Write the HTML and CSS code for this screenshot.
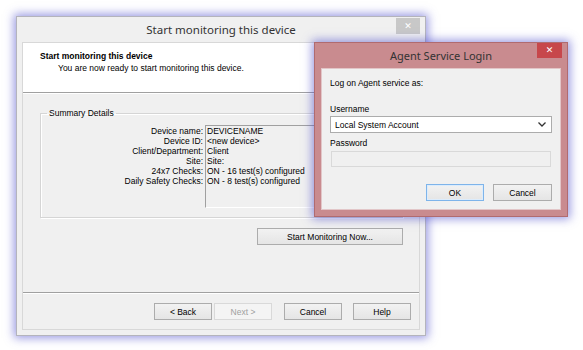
FILE: index.html
```html
<!DOCTYPE html>
<html lang="en">
<head>
  <meta charset="UTF-8">
  <title>Start monitoring this device</title>
  <link rel="stylesheet" href="styles.css">
</head>
<body>
  <!-- Wizard window -->
  <div class="window wizard">
    <div class="titlebar">
      <span></span>
      <span class="title">Start monitoring this device</span>
      <span class="close">&#x2715;</span>
    </div>
    <div class="client">
      <div class="wizard-header">
        <h3>Start monitoring this device</h3>
        <p>You are now ready to start monitoring this device.</p>
      </div>

      <div class="wizard-body">
        <fieldset class="group">
          <legend>Summary Details</legend>
          <div class="summary">
            <div class="labels">
              <span>Device name:</span>
              <span>Device ID:</span>
              <span>Client/Department:</span>
              <span>Site:</span>
              <span>24x7 Checks:</span>
              <span>Daily Safety Checks:</span>
            </div>
            <div class="values">
              <span>DEVICENAME</span>
              <span>&lt;new device&gt;</span>
              <span>Client</span>
              <span>Site:</span>
              <span>ON - 16 test(s) configured</span>
              <span>ON - 8 test(s) configured</span>
            </div>
          </div>
        </fieldset>
        <div class="start-row">
          <button class="btn btn-start">Start Monitoring Now...</button>
        </div>
      </div>

      <div class="wizard-footer">
        <button class="btn">&lt; Back</button>
        <button class="btn" disabled>Next &gt;</button>
        <button class="btn btn-gap">Cancel</button>
        <button class="btn btn-gap">Help</button>
      </div>
    </div>
  </div>

  <!-- Login window -->
  <div class="window login">
    <div class="titlebar">
      <span></span>
      <span class="title">Agent Service Login</span>
      <span class="close">&#x2715;</span>
    </div>
    <div class="client">
      <p class="intro">Log on Agent service as:</p>
      <label class="field-label">Username</label>
      <div class="combo">
        <span>Local System Account</span>
        <svg width="8" height="5" viewBox="0 0 8 5"><path d="M0.5 0.5 L4 4 L7.5 0.5" fill="none" stroke="#333" stroke-width="1.3"/></svg>
      </div>
      <label class="field-label">Password</label>
      <div class="input-disabled"></div>
      <div class="login-buttons">
        <button class="btn btn-default">OK</button>
        <button class="btn">Cancel</button>
      </div>
    </div>
  </div>
</body>
</html>
```

FILE: styles.css
```css
/* General Reset */
* {
  margin: 0;
  padding: 0;
  box-sizing: border-box;
}

body {
  position: relative;
  width: 583px;
  height: 350px;
  background: #fff;
  font-family: "Liberation Sans", Arial, sans-serif;
  font-size: 8.5px;
  color: #000;
  overflow: hidden;
}

/* Windows on the desktop */
.window {
  position: absolute;
  display: flex;
  flex-direction: column;
  box-shadow: 0 0 9px 2px rgba(70, 70, 200, 0.55);
}

.wizard {
  left: 16px;
  top: 16px;
  width: 410px;
  height: 320px;
  background: #f0f0f0;
  border: 1px solid #b4b4bc;
  padding: 0 5px 5px;
}

.login {
  left: 314px;
  top: 42px;
  width: 254px;
  height: 175px;
  background: #c98b8f;
  border: 1px solid #b06b70;
  padding: 0 6px 6px;
}

/* Title bar */
.titlebar {
  display: grid;
  grid-template-columns: 1fr auto 1fr;
  height: 25px;
  flex-shrink: 0;
}

.title {
  font-family: "Noto Sans", "Open Sans", sans-serif;
  font-size: 11.5px;
  color: #333;
  line-height: 25px;
  white-space: nowrap;
}

.close {
  justify-self: end;
  width: 24px;
  height: 16px;
  margin-top: 1px;
  background: #c8c8c8;
  color: #fff;
  font-family: "DejaVu Sans", sans-serif;
  font-size: 9px;
  font-weight: bold;
  line-height: 16px;
  text-align: center;
}

.login .title {
  font-size: 11px;
  line-height: 26px;
}

.login .close {
  width: 25px;
  height: 15px;
  margin-top: 0;
  margin-right: -1px;
  line-height: 15px;
  background: #c7474b;
}

/* Client areas */
.client {
  flex: 1;
  display: flex;
  flex-direction: column;
  background: #f0f0f0;
  border: 1px solid #d8d8d8;
}

.wizard-header {
  height: 50px;
  background: #fff;
  border-bottom: 1px solid #a0a0a0;
  padding: 8px 0 0 17px;
}

.wizard-header h3 {
  font-size: 8.5px;
  font-weight: bold;
  line-height: 11px;
}

.wizard-header p {
  line-height: 12px;
  padding-left: 18px;
}

.wizard-body {
  flex: 1;
  display: flex;
  flex-direction: column;
  border-top: 1px solid #fff;
  padding: 15px 16px 0 17px;
}

/* Group box */
.group {
  height: 109px;
  border: 1px solid #d5d5d5;
  box-shadow: inset 1px 1px #fff, 1px 1px #fff;
  padding: 0;
}

.group legend {
  margin-left: 6px;
  padding: 0 2px;
  line-height: 9px;
}

.summary {
  display: grid;
  grid-template-columns: 162px 1fr;
  gap: 2px;
  margin-top: 7px;
  padding-right: 8px;
}

.labels,
.values {
  display: flex;
  flex-direction: column;
  line-height: 10px;
}

.labels {
  text-align: right;
  padding-top: 1px;
}

.values {
  height: 83px;
  border-top: 1px solid #a0a0a0;
  border-left: 1px solid #a0a0a0;
  border-right: 1px solid #fff;
  border-bottom: 1px solid #fff;
  padding-left: 1px;
}

.start-row {
  display: flex;
  justify-content: flex-end;
  margin-top: 10px;
}

/* Buttons */
.btn {
  width: 58px;
  height: 17px;
  font-family: "Liberation Sans", Arial, sans-serif;
  font-size: 8.5px;
  color: #000;
  background: linear-gradient(#f2f2f2, #e5e5e5);
  border: 1px solid #acacac;
}

.btn:disabled {
  color: #a0a0a0;
  background: #f4f4f4;
  border-color: #d9d9d9;
}

.btn-start {
  width: 146px;
}

.btn-gap {
  margin-left: 10px;
}

.wizard-footer {
  height: 37px;
  display: flex;
  justify-content: flex-end;
  gap: 2px;
  border-top: 1px solid #a0a0a0;
  box-shadow: inset 0 1px #fff;
  padding: 10px 8px 0 0;
}

.wizard-footer .btn-gap:last-child {
  margin-left: 9px;
}

/* Login form */
.login .client {
  border-color: #e2c6c8;
  padding: 9px 8px 0 8px;
  font-size: 8.5px;
}

.intro {
  line-height: 10px;
  margin-bottom: 16px;
}

.field-label {
  display: block;
  line-height: 10px;
  margin-bottom: 2px;
}

.combo {
  display: flex;
  align-items: center;
  justify-content: space-between;
  height: 17px;
  background: #fff;
  border: 1px solid #acacac;
  padding: 0 5px 0 4px;
  margin-bottom: 5px;
}

.input-disabled {
  height: 16px;
  margin: 1px 1px 0;
  background: #f0f0f0;
  border: 1px solid #d9d9d9;
}

.login-buttons {
  display: flex;
  justify-content: flex-end;
  gap: 9px;
  margin-top: 17px;
}

.login-buttons .btn:last-child {
  width: 59px;
}

.btn-default {
  border-color: #7eb4ea;
  box-shadow: inset 0 0 0 1px #dcecfc;
}
```
